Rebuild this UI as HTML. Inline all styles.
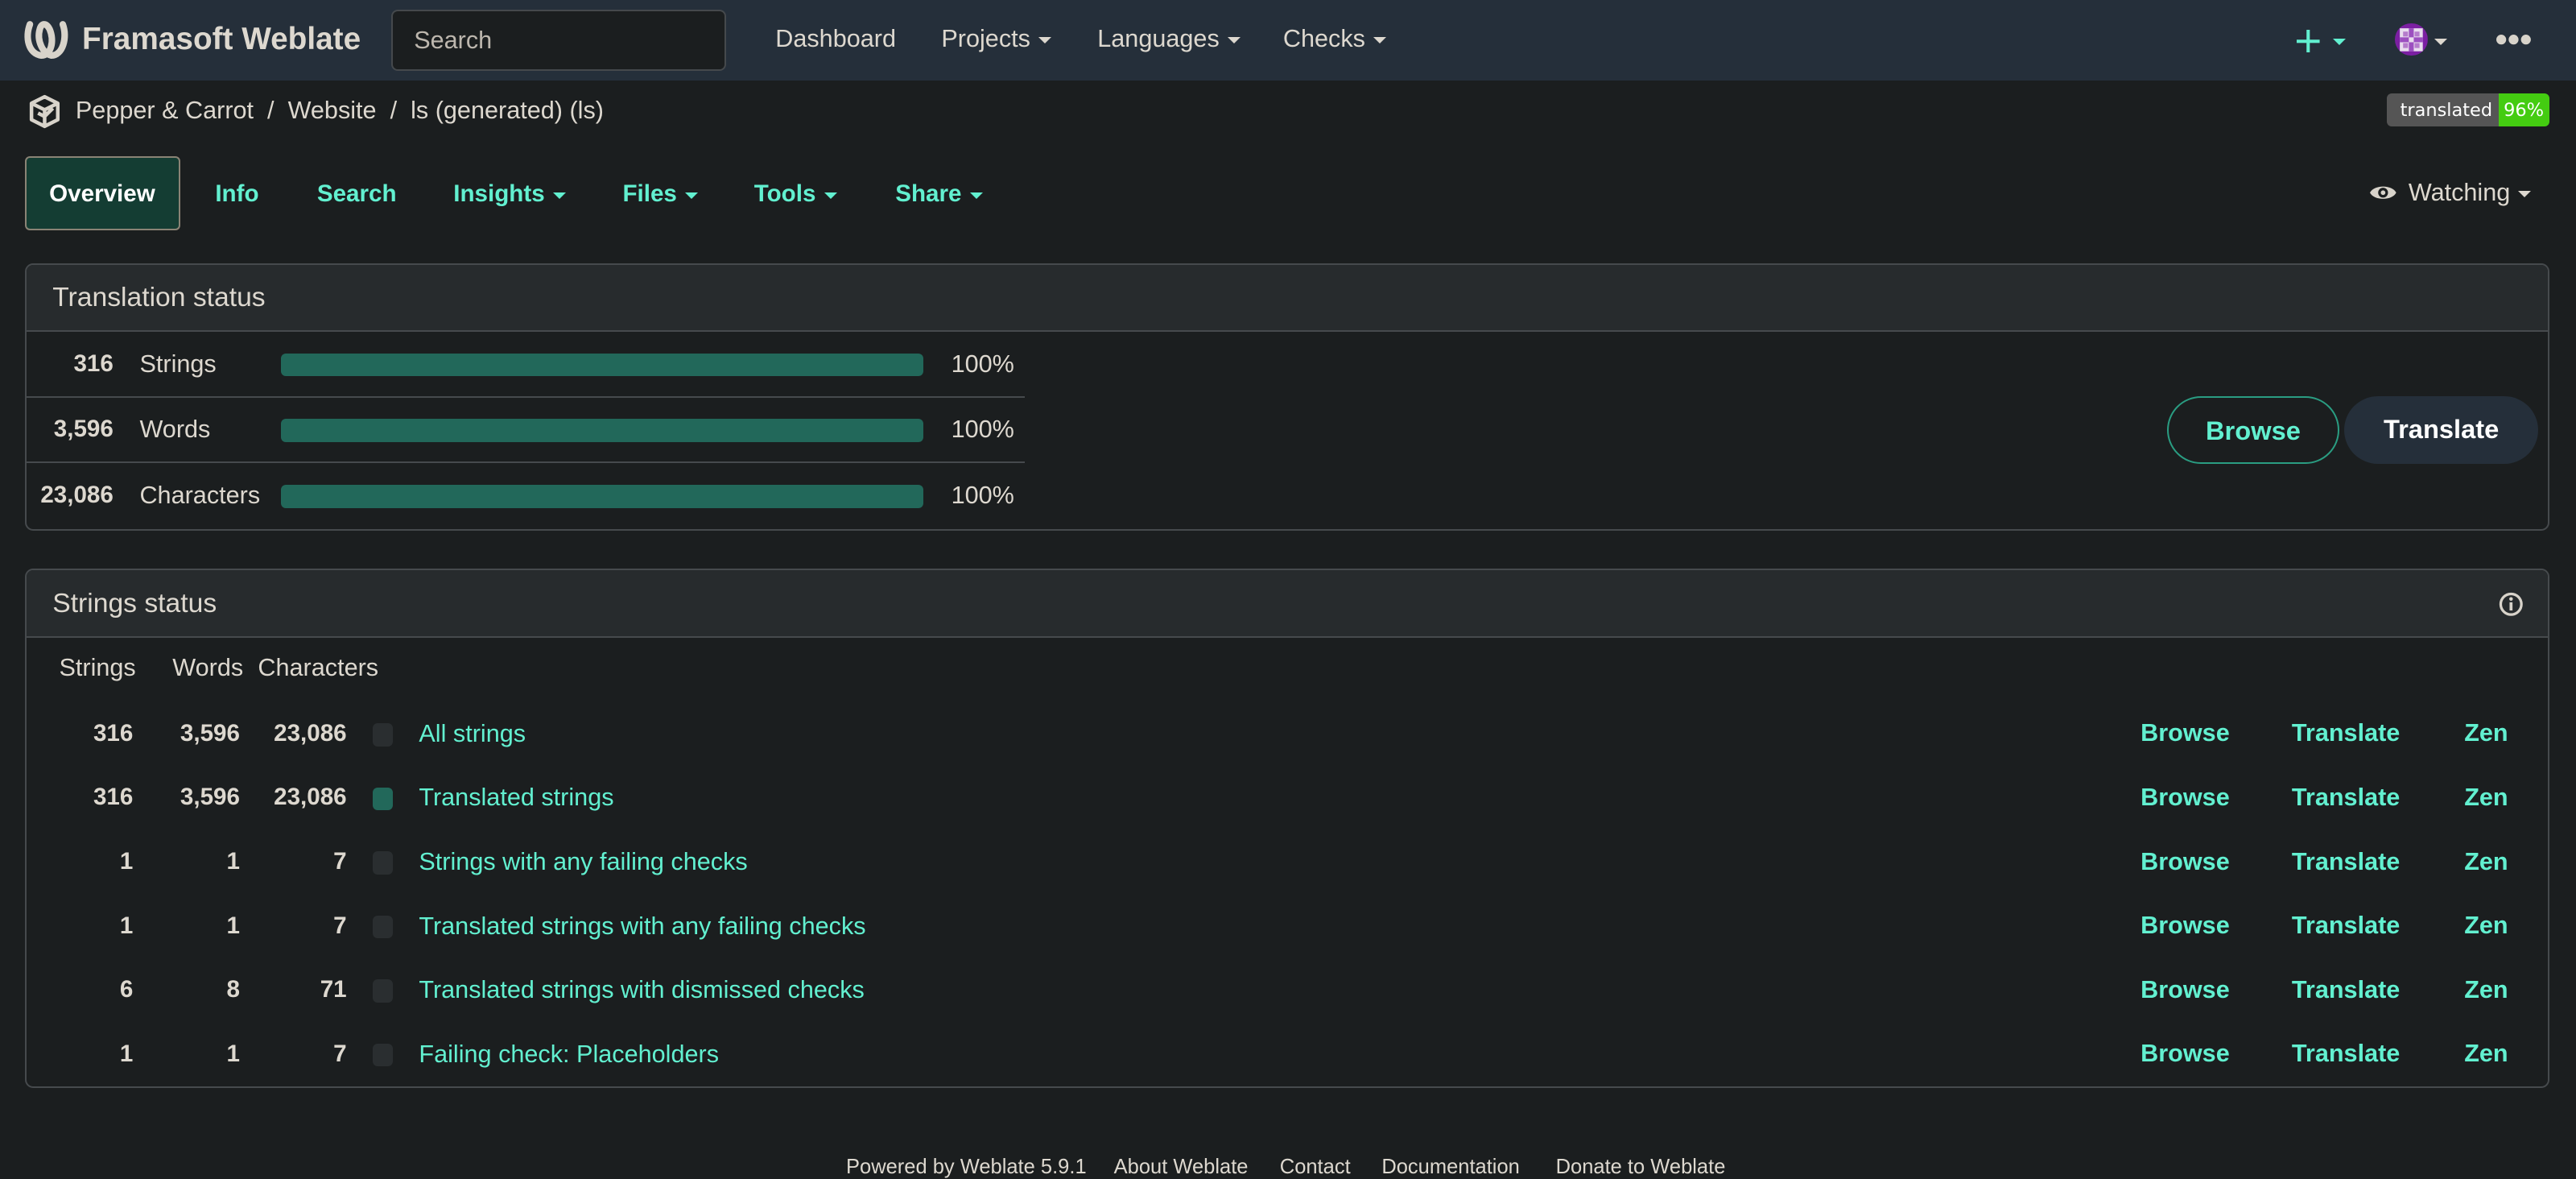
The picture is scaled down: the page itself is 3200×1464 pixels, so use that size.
<!DOCTYPE html>
<html><head><meta charset="utf-8">
<style>
html{zoom:2.0408}
*{box-sizing:border-box;margin:0;padding:0}
body{width:1568px;height:715px;background:#1b1e1f;color:#ddd8cf;font-family:"Liberation Sans",sans-serif;font-size:15px;position:relative;overflow:hidden}
.a{position:absolute;white-space:nowrap}
.nav{position:absolute;left:0;top:0;width:1568px;height:49px;background:#252f3a}
.l{color:#62f0d0}
.caret{display:inline-block;width:0;height:0;border-left:4px solid transparent;border-right:4px solid transparent;border-top:4px solid currentColor;vertical-align:middle;margin-left:5px}
.panel{position:absolute;left:15px;width:1537px;border:1px solid #464a4d;border-radius:5px;overflow:hidden}
.ph{height:41px;background:#272b2d;border-bottom:1px solid #464a4d;font-size:16.5px;padding:11px 0 0 16px}
.bar{position:absolute;left:171px;width:391px;height:14px;background:#22685a;border-radius:3px}
.num{position:absolute;text-align:right;font-weight:bold;font-size:14.5px}
.sq{position:absolute;left:227px;width:12px;height:14px;border-radius:3px;background:#2a2e30}
.tab{font-size:14.5px;font-weight:bold}
.ft{position:absolute;top:703px;font-size:12.5px}
</style></head><body>
<div class="nav"></div>
<svg class="a" style="left:14px;top:11px" width="28" height="26" viewBox="0 0 28 26"><path d="M4 4 C1 12 3 22 11 23 C17 23 19 14 16 7 C14 3 11 3 10 7 C8 14 12 22 17 23 C24 23 27 12 24 4" fill="none" stroke="#d8d3ca" stroke-width="4" stroke-linecap="round"/></svg>
<div class="a" style="left:50px;top:13px;font-size:19px;font-weight:bold;color:#ddd8cf">Framasoft Weblate</div>
<div class="a" style="left:238px;top:6px;width:204px;height:37px;background:#1b1e1f;border:1px solid #45494c;border-radius:4px;padding:9px 0 0 13px;color:#bdb7ae;font-size:15px">Search</div>
<div class="a" style="left:472px;top:15px;font-size:15px">Dashboard</div>
<div class="a" style="left:573px;top:15px;font-size:15px">Projects<span class="caret"></span></div>
<div class="a" style="left:668px;top:15px;font-size:15px">Languages<span class="caret"></span></div>
<div class="a" style="left:781px;top:15px;font-size:15px">Checks<span class="caret"></span></div>
<svg class="a" style="left:1398px;top:18px" width="14" height="14"><rect x="6" y="0" width="2" height="14" fill="#62f0d0"/><rect x="0" y="6" width="14" height="2" fill="#62f0d0"/></svg>
<div class="a l" style="left:1415px;top:16px"><span class="caret"></span></div>
<div class="a" style="left:1458px;top:14px;width:20px;height:20px;border-radius:50%;overflow:hidden">
<svg width="20" height="20" viewBox="0 0 20 20"><rect width="20" height="20" fill="#7b1fa2"/><rect x="3" y="3" width="14" height="14" fill="#e8dcee"/><rect x="5" y="5" width="3" height="3" fill="#b57ccc"/><rect x="12" y="5" width="3" height="3" fill="#b57ccc"/><rect x="5" y="12" width="3" height="3" fill="#b57ccc"/><rect x="12" y="12" width="3" height="3" fill="#b57ccc"/><rect x="8.5" y="3" width="3" height="14" fill="#9c4fc0"/><rect x="3" y="8.5" width="14" height="3" fill="#9c4fc0"/><rect x="8.5" y="8.5" width="3" height="3" fill="#e8dcee"/></svg></div>
<div class="a" style="left:1477px;top:16px;color:#ddd8cf"><span class="caret"></span></div>
<svg class="a" style="left:1519px;top:20px" width="22" height="8"><circle cx="3.5" cy="4" r="3" fill="#d8d3ca"/><circle cx="11" cy="4" r="3" fill="#d8d3ca"/><circle cx="18.5" cy="4" r="3" fill="#d8d3ca"/></svg>

<svg class="a" style="left:16px;top:57px" width="22" height="22" viewBox="0 0 22 22"><path d="M11 2 L19 6 L19 16 L11 20 L3 16 L3 6 Z M3 6 L11 10 L19 6 M11 10 L11 20 M7 12 L11 14 L16 9" fill="none" stroke="#d8d3ca" stroke-width="2.2" stroke-linejoin="round"/></svg>
<div class="a" style="left:46px;top:59px;font-size:15px">Pepper &amp; Carrot&nbsp; /&nbsp; Website&nbsp; /&nbsp; ls (generated) (ls)</div>
<div class="a" style="left:1453px;top:57px;width:99px;height:20px;border-radius:3px;overflow:hidden;font-family:'DejaVu Sans',sans-serif;font-size:11px;color:#fff">
<div style="position:absolute;left:0;top:0;width:68px;height:20px;background:#555;padding:4px 0 0 8px">translated</div>
<div style="position:absolute;left:68px;top:0;width:31px;height:20px;background:#4c1;padding:4px 0 0 3px">96%</div></div>

<div class="a" style="left:15px;top:95px;width:95px;height:45px;background:#143d33;border:1px solid #8a8375;border-radius:3px;color:#fff;font-weight:bold;padding:14px 0 0 14px;font-size:14.5px">Overview</div>
<div class="a l tab" style="left:131px;top:110px">Info</div>
<div class="a l tab" style="left:193px;top:110px">Search</div>
<div class="a l tab" style="left:276px;top:110px">Insights<span class="caret"></span></div>
<div class="a l tab" style="left:379px;top:110px">Files<span class="caret"></span></div>
<div class="a l tab" style="left:459px;top:110px">Tools<span class="caret"></span></div>
<div class="a l tab" style="left:545px;top:110px">Share<span class="caret"></span></div>
<svg class="a" style="left:1442px;top:111px" width="17" height="12" viewBox="0 0 17 12"><path d="M0.5 6 C3 1 14 1 16.5 6 C14 11 3 11 0.5 6Z" fill="#d8d3ca"/><circle cx="8.5" cy="6" r="3" fill="#1b1e1f"/><circle cx="8.5" cy="6" r="1.4" fill="#d8d3ca"/></svg>
<div class="a" style="left:1466px;top:109px;font-size:15px">Watching<span class="caret"></span></div>

<div class="panel" style="top:160px;height:163px">
<div class="ph">Translation status</div>
<div style="position:absolute;left:0;top:80px;width:608px;height:1px;background:#464a4d"></div>
<div style="position:absolute;left:0;top:120px;width:608px;height:1px;background:#464a4d"></div>
</div>
<div class="num a" style="left:0;width:69px;top:213px">316</div><div class="a" style="left:85px;top:213px">Strings</div><div class="bar" style="top:215px"></div><div class="a" style="left:579px;top:213px">100%</div>
<div class="num a" style="left:0;width:69px;top:253px">3,596</div><div class="a" style="left:85px;top:253px">Words</div><div class="bar" style="top:255px"></div><div class="a" style="left:579px;top:253px">100%</div>
<div class="num a" style="left:0;width:69px;top:293px">23,086</div><div class="a" style="left:85px;top:293px">Characters</div><div class="bar" style="top:295px"></div><div class="a" style="left:579px;top:293px">100%</div>
<div class="a l" style="left:1319px;top:241px;width:105px;height:41px;border:1px solid #2a9d82;border-radius:21px;text-align:center;padding-top:11px;font-size:16px;font-weight:bold">Browse</div>
<div class="a" style="left:1427px;top:241px;width:118px;height:41px;background:#252f3a;border-radius:21px;text-align:center;padding-top:11px;font-size:16px;font-weight:bold;color:#fff">Translate</div>

<div class="panel" style="top:346px;height:316px"><div class="ph">Strings status</div></div>
<svg class="a" style="left:1521px;top:360px" width="15" height="15" viewBox="0 0 15 15"><circle cx="7.5" cy="7.5" r="6.3" fill="none" stroke="#d8d3ca" stroke-width="1.6"/><rect x="6.6" y="6.3" width="1.8" height="5" fill="#d8d3ca"/><circle cx="7.5" cy="4.3" r="1.1" fill="#d8d3ca"/></svg>
<div class="a" style="left:36px;top:398px">Strings</div>
<div class="a" style="left:105px;top:398px">Words</div>
<div class="a" style="left:157px;top:398px">Characters</div>

<div class="num a" style="left:0;width:81px;top:438px">316</div><div class="num a" style="left:90px;width:56px;top:438px">3,596</div><div class="num a" style="left:150px;width:61px;top:438px">23,086</div><div class="sq" style="top:440px"></div><div class="a l" style="left:255px;top:438px">All strings</div>
<div class="num a" style="left:0;width:81px;top:477px">316</div><div class="num a" style="left:90px;width:56px;top:477px">3,596</div><div class="num a" style="left:150px;width:61px;top:477px">23,086</div><div class="sq" style="top:479px;background:#22685a"></div><div class="a l" style="left:255px;top:477px">Translated strings</div>
<div class="num a" style="left:0;width:81px;top:516px">1</div><div class="num a" style="left:90px;width:56px;top:516px">1</div><div class="num a" style="left:150px;width:61px;top:516px">7</div><div class="sq" style="top:518px"></div><div class="a l" style="left:255px;top:516px">Strings with any failing checks</div>
<div class="num a" style="left:0;width:81px;top:555px">1</div><div class="num a" style="left:90px;width:56px;top:555px">1</div><div class="num a" style="left:150px;width:61px;top:555px">7</div><div class="sq" style="top:557px"></div><div class="a l" style="left:255px;top:555px">Translated strings with any failing checks</div>
<div class="num a" style="left:0;width:81px;top:594px">6</div><div class="num a" style="left:90px;width:56px;top:594px">8</div><div class="num a" style="left:150px;width:61px;top:594px">71</div><div class="sq" style="top:596px"></div><div class="a l" style="left:255px;top:594px">Translated strings with dismissed checks</div>
<div class="num a" style="left:0;width:81px;top:633px">1</div><div class="num a" style="left:90px;width:56px;top:633px">1</div><div class="num a" style="left:150px;width:61px;top:633px">7</div><div class="sq" style="top:635px"></div><div class="a l" style="left:255px;top:633px">Failing check: Placeholders</div>

<div class="a l" style="left:1303px;top:427px;font-weight:bold;white-space:normal;width:60px;line-height:39px">Browse<br>Browse<br>Browse<br>Browse<br>Browse<br>Browse</div>
<div class="a l" style="left:1395px;top:427px;font-weight:bold;white-space:normal;width:70px;line-height:39px">Translate<br>Translate<br>Translate<br>Translate<br>Translate<br>Translate</div>
<div class="a l" style="left:1500px;top:427px;font-weight:bold;white-space:normal;width:40px;line-height:39px">Zen<br>Zen<br>Zen<br>Zen<br>Zen<br>Zen</div>

<div class="ft" style="left:515px">Powered by Weblate 5.9.1</div>
<div class="ft" style="left:678px">About Weblate</div>
<div class="ft" style="left:779px">Contact</div>
<div class="ft" style="left:841px">Documentation</div>
<div class="ft" style="left:947px">Donate to Weblate</div>
</body></html>
